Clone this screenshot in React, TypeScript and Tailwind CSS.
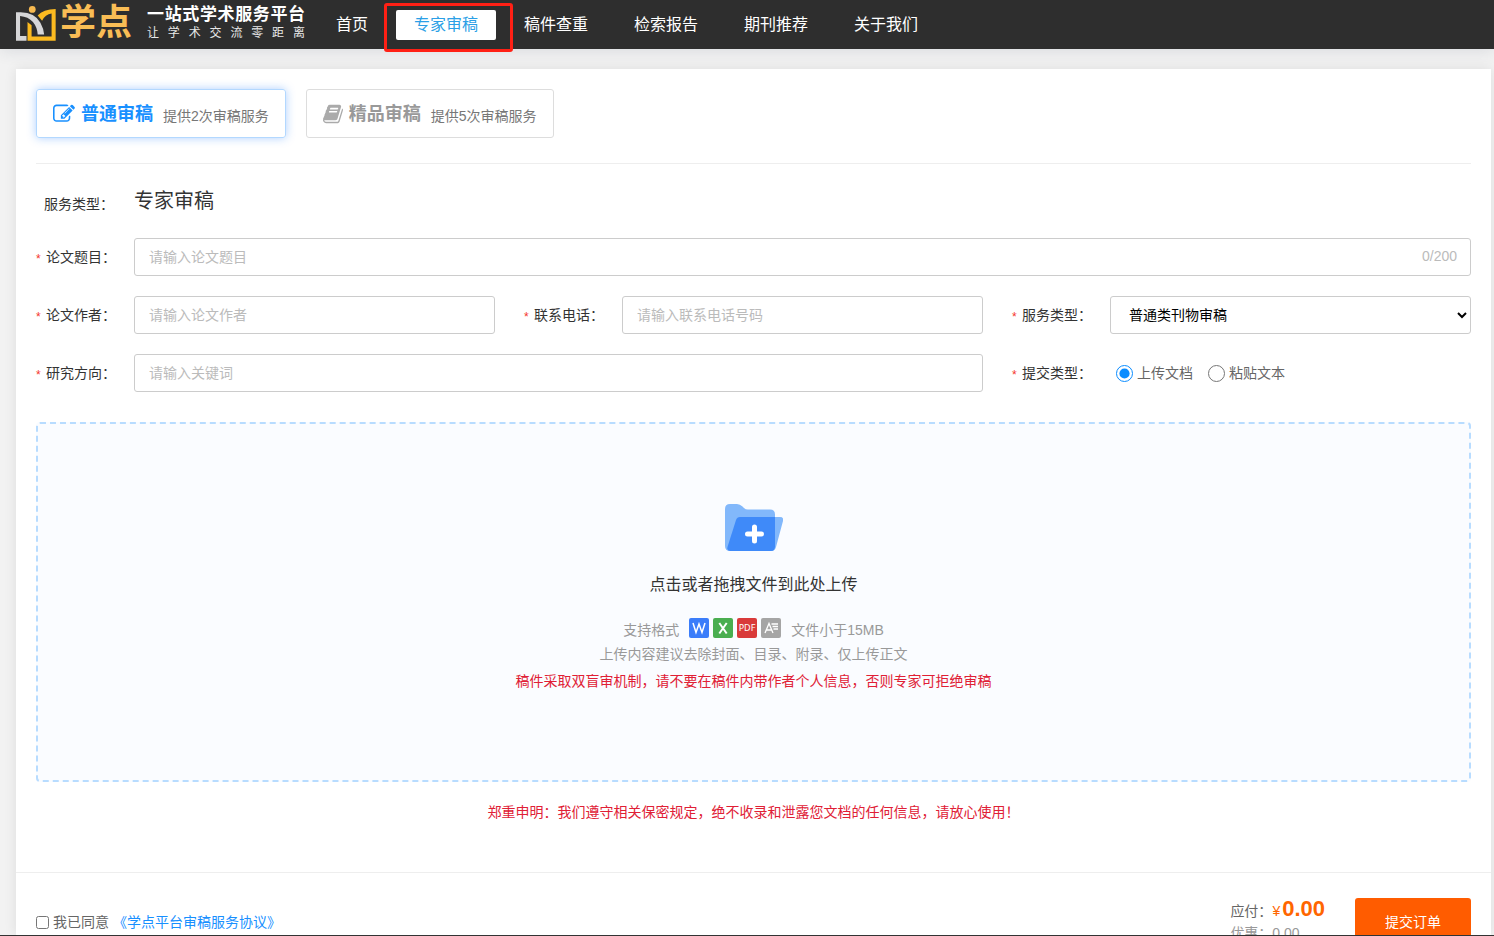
import React, { useState } from "react";

const NAV = ["首页", "专家审稿", "稿件查重", "检索报告", "期刊推荐", "关于我们"];

function LogoMark() {
  return (
    <svg viewBox="48 12 118 106" className="h-9 w-10" aria-hidden="true">
      <path
        d="M82 62L94 72V105H153V37Q134 40 125 58L112 43Q128 25 165 24V117H82Z"
        fill="#fbba20"
      />
      <path
        d="M48 33H62Q104 34 120 64Q130 82 131 99H112Q111 78 98 62Q84 46 60 44V103H79V117H48Z"
        fill="#d6d6d8"
      />
      <circle cx="96" cy="25" r="10" fill="#f6b950" />
    </svg>
  );
}

function EditIcon() {
  return (
    <svg viewBox="0 0 1792 1792" className="size-[22px]" fill="currentColor" aria-hidden="true">
      <path d="M888 1184l116-116-152-152-116 116v56h96v96h56zm440-720q-16-16-33 1l-350 350q-17 17-1 33t33-1l350-350q17-17 1-33zm80 594v190q0 119-84.5 203.5t-203.5 84.5h-832q-119 0-203.5-84.5t-84.5-203.5v-832q0-119 84.5-203.5t203.5-84.5h832q63 0 117 25 15 7 18 23 3 17-9 29l-49 49q-14 14-32 8-23-6-45-6h-832q-66 0-113 47t-47 113v832q0 66 47 113t113 47h832q66 0 113-47t47-113v-126q0-13 9-22l64-64q15-15 35-7t20 29zm-96-738l288 288-672 672h-288v-288zm444 132l-92 92-288-288 92-92q28-28 68-28t68 28l152 152q28 28 28 68t-28 68z" />
    </svg>
  );
}

function BookIcon() {
  return (
    <svg viewBox="64 0 1664 1792" className="h-[22px] w-5 text-[#aaa]" fill="currentColor" aria-hidden="true">
      <path d="M1703 478q40 57 18 129l-275 906q-19 64-76.5 107.5t-122.5 43.5h-923q-77 0-148.5-53.5t-99.5-131.5q-24-67-2-127 0-4 3-27t4-37q1-8-3-21.5t-3-19.5q2-11 8-21t16.5-23.5 16.5-23.5q23-38 45-91.5t30-91.5q3-10 .5-30t-.5-28q3-11 17-28t17-23q21-36 42-92t25-90q1-9-2.5-32t.5-28q4-13 22-30.5t22-22.5q19-26 42.5-84.5t27.5-96.5q1-8-3-25.5t-2-26.5q2-8 9-18t18-23 17-21q8-12 16.5-30.5t15-35 16-36 19.5-32 26.5-23.5 36-11.5 47.5 5.5l-1 3q38-9 51-9h761q74 0 114 56t18 130l-274 906q-36 119-71.5 153.5t-128.5 34.5h-869q-27 0-38 15-11 16-1 43 24 70 144 70h923q29 0 56-15.5t35-41.5l300-987q7-22 5-57 38 15 59 43zm-1064 2q-4 13 2 22.5t20 9.5h608q13 0 25.5-9.5t16.5-22.5l21-64q4-13-2-22.5t-20-9.5h-608q-13 0-25.5 9.5t-16.5 22.5zm-83 256q-4 13 2 22.5t20 9.5h608q13 0 25.5-9.5t16.5-22.5l21-64q4-13-2-22.5t-20-9.5h-608q-13 0-25.5 9.5t-16.5 22.5z" />
    </svg>
  );
}

function FolderIcon() {
  return (
    <svg viewBox="0 0 58 47" className="h-[47px] w-[58px]" aria-hidden="true">
      <path
        d="M5 0H12Q15 0 17.500 2.500L19 4Q20.500 5.500 23 5.500H45Q50 5.500 50 10.500V43Q50 47 46 47H5Q0 47 0 42V5Q0 0 5 0Z"
        fill="#82b8fb"
      />
      <path d="M50 13H55Q59 13 58 17L51 43Q50 47 46 47Z" fill="#82b8fb" />
      <path d="M15 13H50V43Q49.500 47 46 47H5Q1.500 46.500 2.500 43L11 16Q12 13 15 13Z" fill="#3f8af9" />
      <path d="M29.500 23V37M22.500 30H36.500" stroke="#fff" strokeWidth="5" strokeLinecap="round" />
    </svg>
  );
}

function FormatIcon({ kind }: { kind: "word" | "excel" | "pdf" | "text" }) {
  const fills = { word: "#3b7dfa", excel: "#4aae50", pdf: "#d93a3a", text: "#a5a5a5" };
  return (
    <svg viewBox="0 0 20 20" className="size-5" fill="none" stroke="#fff" aria-hidden="true">
      <rect width="20" height="20" rx="2" fill={fills[kind]} stroke="none" />
      {kind === "word" && <path d="M4 5L7 14.500L10 6L13 14.500L16 5" strokeWidth="1.500" />}
      {kind === "excel" && <path d="M6.300 5L13.700 15.500M13.700 5L6.300 15.500" strokeWidth="2" />}
      {kind === "pdf" && (
        <text x="10" y="13.200" textAnchor="middle" fontSize="9" fill="#fff" stroke="none" fontFamily="Noto Sans, sans-serif">
          PDF
        </text>
      )}
      {kind === "text" && (
        <path d="M4 15L8 5.500L12 15M5.300 12H10.700M10.500 6H17M11.500 8.500H17M12.500 11H17" strokeWidth="1.300" />
      )}
    </svg>
  );
}

function Label({ id, children }: { id: string; children: React.ReactNode }) {
  return (
    <label htmlFor={id} className="flex w-[98px] shrink-0 items-center gap-[5px] text-[#333]">
      <span className="w-[5px] pt-1 text-xs leading-4 text-[#f5352b]">*</span>
      {children}
    </label>
  );
}

const field =
  "h-[38px] w-full min-w-0 rounded-[3px] border border-[#ccc] bg-white px-3.5 text-sm text-[#333] outline-none placeholder:text-[#bbb]";

export default function App() {
  const [plan, setPlan] = useState(0);
  const [title, setTitle] = useState("");
  const tab = "flex h-[49px] items-center rounded-[3px] border px-4";
  const on = "border-[#b3d8ff] text-[#1890ff] shadow-[0_0_10px_rgba(24,120,255,0.35)]";
  const off = "border-[#ddd] text-[#999]";
  return (
    <div className="flex h-screen flex-col overflow-hidden border-b border-[#333] bg-[#f2f2f2] font-['Liberation_Sans','Noto_Sans_CJK_SC',sans-serif] text-sm leading-5 text-[#666]">
      <header className="z-10 flex h-[49px] shrink-0 items-center bg-[#2e2e2e] pl-4 shadow-[0_2px_16px_rgba(40,60,90,0.12)]">
        <a href="#" className="flex items-center">
          <span className="pb-1">
            <LogoMark />
          </span>
          <span className="ml-1 w-[75px] pb-1 text-4xl leading-9 font-bold text-[#f9bd55]">学点</span>
          <span className="ml-3 flex w-[158px] flex-col pb-1">
            <span className="flex justify-between text-[17px] leading-5 font-bold text-white">
              {"一站式学术服务平台".split("").map((c, i) => <span key={i}>{c}</span>)}
            </span>
            <span className="flex justify-between text-xs leading-4 text-[#e8e8e8]">
              {"让学术交流零距离".split("").map((c, i) => <span key={i}>{c}</span>)}
            </span>
          </span>
        </a>
        <nav className="ml-[13px] flex gap-2.5 text-base">
          {NAV.map((n, i) =>
            i === 1 ? (
              <div key={n} className="relative">
                <a href="#" className="block rounded-xs bg-white px-[18px] leading-[30px] text-[#2b9fe6]">
                  {n}
                </a>
                <span className="pointer-events-none absolute -inset-x-3 -top-[7px] -right-[17px] -bottom-3 rounded-[3px] border-3 border-[#ff2015]" />
              </div>
            ) : (
              <a key={n} href="#" className="px-[18px] leading-[30px] text-white">
                {n}
              </a>
            ),
          )}
        </nav>
      </header>

      <main className="mt-5 mr-[3px] ml-4 flex-1 overflow-hidden bg-white shadow-[0_0_12px_rgba(0,0,0,0.09)]">
        <div className="px-5 pt-5">
          <div className="flex gap-5 border-b border-[#eee] pb-[25px]">
            <button type="button" onClick={() => setPlan(0)} className={`${tab} ${plan === 0 ? on : off}`}>
              <EditIcon />
              <span className="ml-1.5 text-lg leading-6 font-bold">普通审稿</span>
              <span className="ml-2.5 pt-1 text-[#777]">提供2次审稿服务</span>
            </button>
            <button type="button" onClick={() => setPlan(1)} className={`${tab} ${plan === 1 ? on : off}`}>
              <BookIcon />
              <span className="ml-1.5 text-lg leading-6 font-bold">精品审稿</span>
              <span className="ml-2.5 pt-1 text-[#777]">提供5次审稿服务</span>
            </button>
          </div>

          <form>
            <div className="flex h-[74px] items-center text-[#333]">
              <span className="w-[98px] pt-1.5 pl-2">服务类型：</span>
              <span className="text-xl">专家审稿</span>
            </div>
            <div className="grid grid-cols-3 gap-x-[29px] gap-y-5">
              <div className="col-span-3 flex items-center">
                <Label id="title">论文题目：</Label>
                <div className="relative flex-1">
                  <input
                    id="title"
                    className={field}
                    placeholder="请输入论文题目"
                    maxLength={200}
                    value={title}
                    onChange={(e) => setTitle(e.target.value)}
                  />
                  <span className="absolute top-2 right-3.5 text-[#bbb]">{title.length}/200</span>
                </div>
              </div>
              <div className="flex items-center">
                <Label id="author">论文作者：</Label>
                <input id="author" className={field} placeholder="请输入论文作者" />
              </div>
              <div className="flex items-center">
                <Label id="phone">联系电话：</Label>
                <input id="phone" className={field} placeholder="请输入联系电话号码" />
              </div>
              <div className="flex items-center">
                <Label id="service">服务类型：</Label>
                <select id="service" className="h-[38px] w-full min-w-0 rounded-[3px] border border-[#ccc] bg-white pl-3.5 text-sm text-black">
                  <option>普通类刊物审稿</option>
                </select>
              </div>
              <div className="col-span-2 flex items-center">
                <Label id="field">研究方向：</Label>
                <input id="field" className={field} placeholder="请输入关键词" />
              </div>
              <div className="flex items-center">
                <Label id="upload">提交类型：</Label>
                <div className="flex gap-[15px] pl-1.5">
                  <label className="flex items-center gap-1">
                    <input id="upload" type="radio" name="kind" defaultChecked className="size-[17px] accent-[#0a8cff]" />
                    上传文档
                  </label>
                  <label className="flex items-center gap-1">
                    <input type="radio" name="kind" className="size-[17px] accent-[#0a8cff]" />
                    粘贴文本
                  </label>
                </div>
              </div>
            </div>
          </form>

          <button
            type="button"
            className="mt-[30px] flex h-[360px] w-full flex-col items-center rounded-[4px] border-2 border-dashed border-[#b8dcff] bg-[#fafcff] pt-20 text-[#999]"
          >
            <FolderIcon />
            <span className="mt-[22px] text-base leading-6 text-[#333]">点击或者拖拽文件到此处上传</span>
            <span className="mt-[21px] flex items-start">
              <span className="pt-0.5">支持格式</span>
              <span className="mx-2.5 flex gap-1">
                <FormatIcon kind="word" />
                <FormatIcon kind="excel" />
                <FormatIcon kind="pdf" />
                <FormatIcon kind="text" />
              </span>
              <span className="pt-0.5">文件小于15MB</span>
            </span>
            <span className="mt-1">上传内容建议去除封面、目录、附录、仅上传正文</span>
            <span className="mt-[7px] text-[#e02035]">稿件采取双盲审机制，请不要在稿件内带作者个人信息，否则专家可拒绝审稿</span>
          </button>
          <p className="mt-5 text-center text-[#e02035]">
            郑重申明：我们遵守相关保密规定，绝不收录和泄露您文档的任何信息，请放心使用！
          </p>
        </div>

        <div className="mt-[50px] flex items-start justify-between border-t border-[#eee] px-5 pt-6">
          <div className="flex items-center pt-[15px]">
            <label className="flex items-center gap-1">
              <input type="checkbox" className="size-[13px]" />
              我已同意
            </label>
            <a href="#" className="ml-1 text-[#1890ff]">《学点平台审稿服务协议》</a>
          </div>
          <div className="flex">
            <div className="mr-[30px]">
              <div className="flex items-baseline leading-6">
                应付：<span className="text-[#ff6600]">¥</span>
                <strong className="ml-0.5 text-[22px] text-[#ff6600]">0.00</strong>
              </div>
              <div className="text-[#999]">优惠：0.00</div>
            </div>
            <button type="button" className="mt-px h-12 w-[116px] rounded-[3px] bg-[#ff5c00] text-white">
              提交订单
            </button>
          </div>
        </div>
      </main>
    </div>
  );
}
